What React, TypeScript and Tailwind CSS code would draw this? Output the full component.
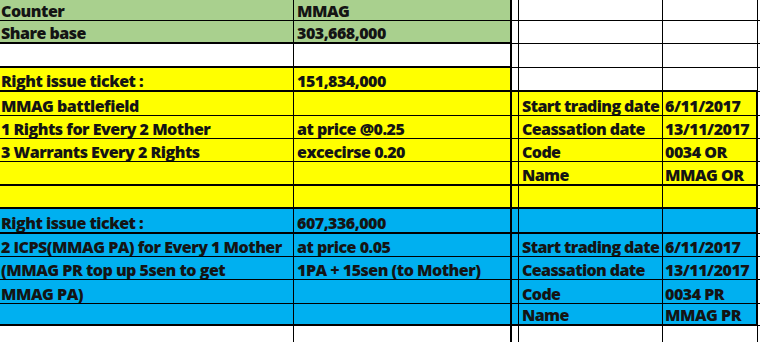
type Bg = "green" | "yellow" | "blue" | "white";

type RowI = {
  h: number;
  bg: [Bg, Bg, Bg, Bg, Bg]; // A B C D E
  cells: [string, string, string, string];
  thickAB?: boolean; // thick bottom under A-B
  thickAll?: boolean; // thick bottom under A-E
  thickERight?: boolean;
};

const bgClass: Record<Bg, string> = {
  green: "bg-[#a9d08e]",
  yellow: "bg-[#ffff00]",
  blue: "bg-[#00b0f0]",
  white: "bg-white",
};

const G: Bg = "green";
const Y: Bg = "yellow";
const B: Bg = "blue";
const W: Bg = "white";

const rows: RowI[] = [
  { h: 21, bg: [G, G, W, W, W], cells: ["Counter", "MMAG", "", ""] },
  { h: 23, bg: [G, G, W, W, W], cells: ["Share base", "303,668,000", "", ""], thickAB: true },
  { h: 24, bg: [W, W, W, W, W], cells: ["", "", "", ""], thickAB: true },
  { h: 24, bg: [Y, Y, W, W, W], cells: ["Right issue ticket :", "151,834,000", "", ""], thickAll: true },
  { h: 24, bg: [Y, Y, Y, Y, Y], cells: ["MMAG battlefield", "", "Start trading date", "6/11/2017"], thickERight: true },
  { h: 23, bg: [Y, Y, Y, Y, Y], cells: ["1 Rights for Every 2 Mother", "at price @0.25", "Ceassation date", "13/11/2017"], thickERight: true },
  { h: 23, bg: [Y, Y, Y, Y, Y], cells: ["3 Warrants Every 2 Rights", "excecirse 0.20", "Code", "0034 OR"], thickERight: true },
  { h: 24, bg: [Y, Y, Y, Y, Y], cells: ["", "", "Name", "MMAG OR"], thickAll: true, thickERight: true },
  { h: 23, bg: [Y, Y, Y, Y, Y], cells: ["", "", "", ""], thickAll: true, thickERight: true },
  { h: 25, bg: [B, B, B, B, B], cells: ["Right issue ticket :", "607,336,000", "", ""], thickAll: true, thickERight: true },
  { h: 23, bg: [B, B, B, B, B], cells: ["2 ICPS(MMAG PA) for Every 1 Mother", "at price 0.05", "Start trading date", "6/11/2017"], thickERight: true },
  { h: 23, bg: [B, B, B, B, B], cells: ["(MMAG PR top up 5sen to get", "1PA + 15sen (to Mother)", "Ceassation date", "13/11/2017"], thickERight: true },
  { h: 24, bg: [B, B, B, B, B], cells: ["MMAG PA)", "", "Code", "0034 PR"], thickERight: true },
  { h: 22, bg: [B, B, B, B, B], cells: ["", "", "Name", "MMAG PR"], thickAll: true, thickERight: true },
  { h: 17, bg: [W, W, W, W, W], cells: ["", "", "", ""] },
];

const Sheet = () => {
  return (
    <div
      className="w-[760px] h-[342px] overflow-hidden bg-white text-[#141414] font-extrabold text-[16px] leading-none tracking-[-0.5px]"
      style={{ fontFamily: "'Open Sans', sans-serif" }}>
      {rows.map((row, i) => {
        const ab = row.thickAB || row.thickAll ? "border-b-2" : "border-b";
        const ce = row.thickAll ? "border-b-2" : "border-b";
        return (
          <div
            key={i}
            className="grid grid-cols-[294px_218px_7px_144px_95px_2px]"
            style={{ height: row.h }}>
            <div className={`${bgClass[row.bg[0]]} ${ab} border-r border-black flex items-end pl-[1px] pb-[1px] whitespace-nowrap overflow-hidden`}>
              {row.cells[0]}
            </div>
            <div className={`${bgClass[row.bg[1]]} ${ab} border-r-2 border-black flex items-end pl-[3px] pb-[1px] whitespace-nowrap overflow-hidden`}>
              {row.cells[1]}
            </div>
            <div className={`${bgClass[row.bg[2]]} ${ce} border-r border-black`} />
            <div className={`${bgClass[row.bg[3]]} ${ce} border-r border-black flex items-end pl-[3px] pb-[1px] whitespace-nowrap overflow-hidden tracking-[-0.6px]`}>
              {row.cells[2]}
            </div>
            <div
              className={`${bgClass[row.bg[4]]} ${ce} ${row.thickERight ? "border-r-2" : "border-r"} border-black flex items-end pl-[2px] pb-[1px] whitespace-nowrap overflow-hidden`}>
              {row.cells[3]}
            </div>
            <div className="bg-white border-b border-black" />
          </div>
        );
      })}
    </div>
  );
};

export default function App() {
  return <Sheet />;
}
